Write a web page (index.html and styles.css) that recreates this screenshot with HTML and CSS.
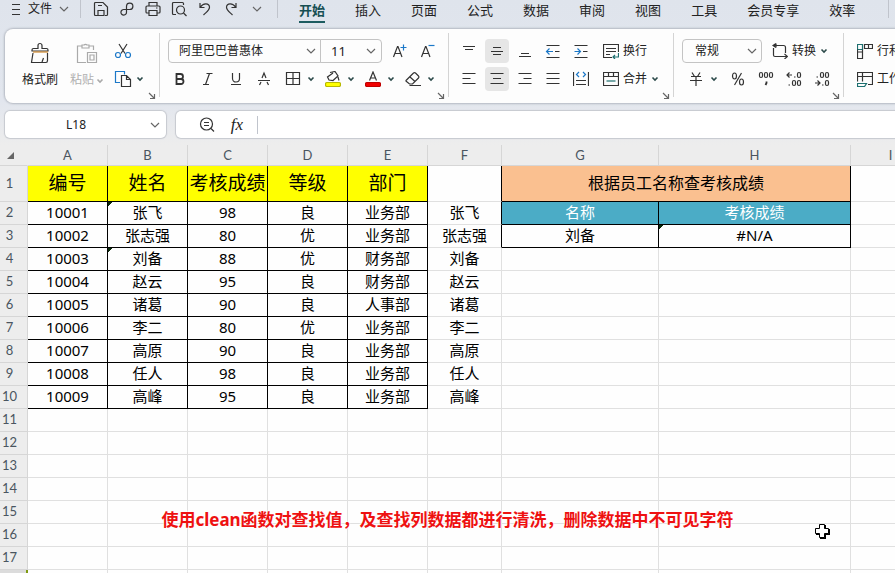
FILE: index.html
```html
<!DOCTYPE html>
<html lang="zh-CN">
<head>
<meta charset="utf-8">
<title>考核成绩</title>
<link rel="stylesheet" href="styles.css">
</head>
<body>
<svg class="defs" aria-hidden="true">
  <symbol id="chev" viewBox="0 0 10 6"><path d="M1 1l4 4 4-4"/></symbol>
  <symbol id="caret" viewBox="0 0 8 6"><path d="M1.500 1.500L4 4l2.500-2.500" stroke-width="1.600"/></symbol>
  <symbol id="launch" viewBox="0 0 8 8"><path d="M1 1l5 5M6.500 2v4.500H2"/></symbol>
</svg>

<header class="topbar">
  <button class="file"><svg class="burger" viewBox="0 0 10 14"><path d="M1 2.500h8M1 7.500h8M1 12.500h8"/></svg>文件<svg class="chev"><use href="#chev"/></svg></button>
  <span class="rule"></span>
  <div class="quick">
    <button aria-label="保存"><svg viewBox="0 0 16 16"><path d="M5 14.500H2.500a1 1 0 0 1-1-1v-11a1 1 0 0 1 1-1H10l4.500 4.500v7.500a1 1 0 0 1-1 1H12M5 14.500v-5h6v5zM5 4.500h4"/></svg></button>
    <button aria-label="输出"><svg viewBox="0 0 16 16"><path d="M9 8.500H5a2.800 2.800 0 1 0 2.500 2.500V5a3.200 3.200 0 1 1 3.200 3.500H9"/></svg></button>
    <button aria-label="打印"><svg viewBox="0 0 16 16"><path d="M4 5V1.500h8V5M4 12H2a1 1 0 0 1-1-1V6a1 1 0 0 1 1-1h12a1 1 0 0 1 1 1v5a1 1 0 0 1-1 1h-2M4 9.500h8v5H4zM11 7h1.500"/></svg></button>
    <button aria-label="打印预览"><svg viewBox="0 0 16 16"><path d="M5 13.500H2.500a1 1 0 0 1-1-1v-10a1 1 0 0 1 1-1h9a1 1 0 0 1 1 1V4"/><circle cx="9.500" cy="9" r="4"/><path d="M12.500 12l3 3"/></svg></button>
    <button aria-label="撤销"><svg viewBox="0 0 16 16"><path d="M3 2v4.500h4.500M3.500 6C6 2 12 1.500 12.500 6c.2 3-3 5-6 8"/></svg></button>
    <button aria-label="恢复"><svg viewBox="0 0 16 16"><path d="M13 2v4.500H8.500M12.500 6C10 2 4 1.500 3.500 6c-.2 3 3 5 6 8"/></svg></button>
    <button aria-label="更多"><svg class="chev"><use href="#chev"/></svg></button>
  </div>
  <span class="rule"></span>
  <nav class="tabs">
    <a class="active" href="#home">开始</a><a href="#insert">插入</a><a href="#page">页面</a><a href="#formula">公式</a><a href="#data">数据</a><a href="#review">审阅</a><a href="#view">视图</a><a href="#tools">工具</a><a href="#member">会员专享</a><a href="#speed">效率</a>
  </nav>
  <span class="rule last"></span>
</header>

<section class="ribbon">
  <div class="group clip">
    <button class="big"><svg viewBox="0 0 22 22"><path d="M3 9h16v-1a1.500 1.500 0 0 0-1.500-1.500H13V3.500a2 2 0 0 0-4 0v3H4.500A1.500 1.500 0 0 0 3 8zM4 11L2.500 20.500h14.500c1 0 1.500-1 1.500-2V11M13 20l1.500-4"/><path class="orange" d="M4 10h15"/></svg>格式刷</button>
    <button class="big off" disabled><svg viewBox="0 0 22 22"><path d="M6 4H1.500v16.500H10M13 4h4.500v4M6 6V3h2a2 2 0 0 1 3 0h2v3z"/><path d="M11.500 10.500h9v10h-9zM14 13h4v5h-4z"/></svg><span>粘贴<svg class="caret"><use href="#caret"/></svg></span></button>
    <div class="stack">
      <button aria-label="剪切"><svg class="wide" viewBox="0 0 18 16"><path d="M5 1l6 9.500M13 1L7 10.500"/><g class="blue"><circle cx="4" cy="12" r="2.500"/><circle cx="14" cy="12" r="2.500"/></g></svg></button>
      <button aria-label="复制"><svg class="wide" viewBox="0 0 18 18"><path class="blue" d="M6 12.500H1.500V1.500h9v3"/><path d="M7.500 5.500h5l4 4v7h-9zM12.500 5.500v4h4"/></svg><svg class="caret"><use href="#caret"/></svg></button>
    </div>
    <svg class="launch"><use href="#launch"/></svg>
  </div>

  <div class="group font">
    <div class="line">
      <label class="pick family"><select aria-label="字体"><option>阿里巴巴普惠体</option></select><svg class="chev"><use href="#chev"/></svg></label>
      <label class="pick size"><select aria-label="字号"><option>11</option></select><svg class="chev"><use href="#chev"/></svg></label>
      <button class="cell first" aria-label="增大字号"><svg viewBox="0 0 16 16"><path d="M1.500 14L5.500 3.500h.5L10 14M3 10.500h5.500"/><path class="blue" d="M8.500 4.500h6M11.500 1.500v6"/></svg></button>
      <button class="cell" aria-label="减小字号"><svg viewBox="0 0 16 16"><path d="M1.500 14L5.500 3.500h.5L10 14M3 10.500h5.500"/><path class="blue" d="M8.500 2.500h6"/></svg></button>
    </div>
    <div class="line">
      <button class="cell" aria-label="加粗"><svg viewBox="0 0 16 16"><path stroke-width="1.800" d="M4.500 3h4a2.500 2.500 0 0 1 0 5h-4zM4.500 8H9a2.500 2.500 0 0 1 0 5H4.500z"/></svg></button>
      <button class="cell" aria-label="斜体"><svg viewBox="0 0 16 16"><path d="M6.500 2.500h6M3 13.500h6M9.500 2.500l-4 11"/></svg></button>
      <button class="cell" aria-label="下划线"><svg viewBox="0 0 16 16"><path d="M4.500 2v5.500a3.500 3.500 0 0 0 7 0V2M3 13.500h10"/></svg></button>
      <button class="cell" aria-label="删除线"><svg viewBox="0 0 16 16"><path d="M2 9.500h12M6 7l2-5 2 5M5 11l-1.500 3M11 11l1.500 3"/></svg></button>
      <button class="combo" aria-label="边框"><svg viewBox="0 0 16 16"><path d="M1.500 1.500h13v12h-13zM8 1.500v12M1.500 7.500h13"/></svg><svg class="caret"><use href="#caret"/></svg></button>
      <button class="combo" aria-label="填充颜色"><svg viewBox="0 0 16 16"><path d="M5 1.500l5-1 3 4.500-5 4.500-4-.5-1.500-3L8 2M13 6l1 3.500"/><rect x=".5" y="11.500" width="15" height="4" rx="1.500" fill="#ffff00" stroke="#b8b800"/></svg><svg class="caret"><use href="#caret"/></svg></button>
      <button class="combo" aria-label="字体颜色"><svg viewBox="0 0 16 16"><path d="M4.500 9.500L8 1 11.500 9.500M5.500 7h5"/><rect x=".5" y="11.500" width="15" height="4" rx="1.500" fill="#f00000" stroke="#c00000"/></svg><svg class="caret"><use href="#caret"/></svg></button>
      <button class="combo" aria-label="清除"><svg viewBox="0 0 16 16"><path d="M1 9.500L8.500 2q1-.8 2 0L13.500 5q1 1 0 2L7.500 13H4.500L1.500 10.500q-.8-.6-.5-1zM5 6l5 4.500M4.500 14.500H16"/></svg><svg class="caret"><use href="#caret"/></svg></button>
    </div>
    <svg class="launch"><use href="#launch"/></svg>
  </div>

  <div class="group align">
    <div class="line">
      <button class="cell" aria-label="顶端对齐"><svg viewBox="0 0 16 16"><path d="M2 3.500h12M4 6.500h8"/></svg></button>
      <button class="cell" aria-label="垂直居中"><svg class="on" viewBox="0 0 24 24"><path d="M8 8.500h8M6 12.500h12M8 15.500h8"/></svg></button>
      <button class="cell" aria-label="底端对齐"><svg viewBox="0 0 16 16"><path d="M4 10.500h8M2 13.500h12"/></svg></button>
      <button class="cell" aria-label="减少缩进"><svg viewBox="0 0 16 16"><path d="M1.500 2.500h13M1.500 14.500h13M10 8.500h4.500"/><path class="blue" d="M8 8.500H2M4.500 5.500l-3 3 3 3"/></svg></button>
      <button class="cell" aria-label="增加缩进"><svg viewBox="0 0 16 16"><path d="M1.500 2.500h13M1.500 14.500h13M10 8.500h4.500"/><path class="blue" d="M1.500 8.500H7M4.500 5.500l3 3-3 3"/></svg></button>
      <button class="text"><svg viewBox="0 0 16 16"><path d="M9 14.500H.5v-13h15V9M3 5.500h10M3 8.500h10M3 11.500h4"/><path class="teal" d="M15.500 10v4h-5M12 12l-2 2 2 2"/></svg>换行</button>
    </div>
    <div class="line">
      <button class="cell" aria-label="左对齐"><svg viewBox="0 0 16 16"><path d="M1.500 2.500h13M1.500 7.500h8M1.500 12.500h13"/></svg></button>
      <button class="cell" aria-label="水平居中"><svg class="on" viewBox="0 0 24 24"><path d="M5.500 6.500h13M8 11.500h8M5.500 16.500h13"/></svg></button>
      <button class="cell" aria-label="右对齐"><svg viewBox="0 0 16 16"><path d="M1.500 2.500h13M6.500 7.500h8M1.500 12.500h13"/></svg></button>
      <button class="cell" aria-label="两端对齐"><svg viewBox="0 0 16 16"><path d="M1.500 2.500h13M1.500 7.500h13M1.500 12.500h13"/></svg></button>
      <button class="cell" aria-label="分散对齐"><svg viewBox="0 0 16 16"><path d="M.5 1v14M15.500 1v14M3 9.500h10M3 13.500h10"/><path class="blue" d="M6 1L3.500 3.500 6 6M10 1l2.500 2.500L10 6"/></svg></button>
      <button class="text"><svg viewBox="0 0 16 16"><path d="M.5 1.500h15v13H.5zM.5 5.500h15M5.500 1.500v4M10.500 1.500v4"/><path class="teal" d="M3.500 10h9"/></svg>合并<svg class="caret"><use href="#caret"/></svg></button>
    </div>
    <svg class="launch"><use href="#launch"/></svg>
  </div>

  <div class="group number">
    <div class="line">
      <label class="pick format"><select aria-label="数字格式"><option>常规</option></select><svg class="chev"><use href="#chev"/></svg></label>
      <button class="text"><svg viewBox="0 0 16 16"><path d="M4 .5v4M2 2.500h9.500a2 2 0 0 1 2 2V10M1.500 5v7a1.500 1.500 0 0 0 1.500 1.500h12M12.500 11l3 2.500-3 2.500M4 .5L1 2.500l3 2"/></svg>转换<svg class="caret"><use href="#caret"/></svg></button>
    </div>
    <div class="line">
      <button class="combo" aria-label="货币"><svg viewBox="0 0 16 16"><path d="M4 1.500l2.500 4M12 1.500l-2.500 4M3 5.500h10M2 9.500h12M8 5.500V15"/></svg><svg class="caret"><use href="#caret"/></svg></button>
      <button class="cell" aria-label="百分比"><svg viewBox="0 0 16 16"><path d="M11.500 2l-7 12"/><ellipse cx="4.500" cy="5" rx="2" ry="3"/><ellipse cx="11.500" cy="11" rx="2" ry="3"/></svg></button>
      <button class="cell" aria-label="千位分隔"><svg viewBox="0 0 16 16"><rect x="1.500" y="1.500" width="3" height="5" rx="1.500"/><rect x="6.500" y="1.500" width="3" height="5" rx="1.500"/><rect x="11.500" y="1.500" width="3" height="5" rx="1.500"/><path stroke-width="1.800" d="M8.500 10.500v1.500L7.500 14"/></svg></button>
      <button class="cell" aria-label="增加小数位"><svg viewBox="0 0 16 16"><path d="M1 4h5M3.500 1.500L1 4l2.500 2.500M8 6h1.500M2.500 14H4"/><rect x="11.500" y="1.500" width="3" height="5" rx="1.500"/><rect x="6.500" y="9.500" width="3" height="5" rx="1.500"/><rect x="11.500" y="9.500" width="3" height="5" rx="1.500"/></svg></button>
      <button class="cell" aria-label="减少小数位"><svg viewBox="0 0 16 16"><path d="M1 12h5M3.500 9.500L6 12l-2.500 2.500M8 14h1.500M2.500 6H4"/><rect x="6.500" y="1.500" width="3" height="5" rx="1.500"/><rect x="11.500" y="1.500" width="3" height="5" rx="1.500"/><rect x="11.500" y="9.500" width="3" height="5" rx="1.500"/></svg></button>
    </div>
    <svg class="launch"><use href="#launch"/></svg>
  </div>

  <div class="group cells">
    <div class="line"><button class="text"><svg viewBox="0 0 16 16"><path class="teal" d="M.5 1.500h5v5h-5z"/><path d="M.5 9v6.500h5V9zM.5 6.500V9M5.500 6.500V9M7.500 1.500h8v4h-8zM11.500 1.500v4"/></svg>行和列</button></div>
    <div class="line"><button class="text"><svg viewBox="0 0 16 16"><path d="M.5 10.500v-9h15v12H11M.5 5.500h15M5.500 1.500v9"/><path class="teal" d="M.5 12.500h9l-2 3h-7z"/></svg>工作表</button></div>
  </div>
</section>

<section class="formula">
  <div class="namebox"><input aria-label="名称框" value="L18"><svg class="chev"><use href="#chev"/></svg></div>
  <div class="entry">
    <svg class="icon" viewBox="0 0 16 16"><circle cx="7.500" cy="7" r="6"/><path d="M12 11.500l3 3M5 5.500h5M5 8.500h5"/></svg>
    <button class="fx" aria-label="插入函数"><i>fx</i></button>
    <span class="rule"></span>
    <input aria-label="编辑栏">
  </div>
</section>

<main class="sheet">
<table>
<colgroup><col class="c-row"><col class="c-a"><col class="c-a"><col class="c-a"><col class="c-a"><col class="c-a"><col class="c-f"><col class="c-g"><col class="c-h"><col class="c-a"></colgroup>
<thead><tr><th class="corner"><svg viewBox="0 0 7 7"><path d="M7 0v7H0z"/></svg></th><th>A</th><th>B</th><th>C</th><th>D</th><th>E</th><th>F</th><th>G</th><th>H</th><th>I</th></tr></thead>
<tbody>
<tr class="head"><th>1</th><td class="b y">编号</td><td class="b y">姓名</td><td class="b y">考核成绩</td><td class="b y">等级</td><td class="b y">部门</td><td class="edge"></td><td class="b title" colspan="2">根据员工名称查考核成绩</td><td></td></tr>
<tr><th>2</th><td class="b">10001</td><td class="b flag">张飞</td><td class="b">98</td><td class="b">良</td><td class="b">业务部</td><td class="edge">张飞</td><td class="b teal-bg">名称</td><td class="b teal-bg">考核成绩</td><td></td></tr>
<tr><th>3</th><td class="b">10002</td><td class="b">张志强</td><td class="b">80</td><td class="b">优</td><td class="b">业务部</td><td class="edge">张志强</td><td class="b">刘备</td><td class="b flag">#N/A</td><td></td></tr>
<tr><th>4</th><td class="b">10003</td><td class="b flag">刘备</td><td class="b">88</td><td class="b">优</td><td class="b">财务部</td><td>刘备</td><td></td><td></td><td></td></tr>
<tr><th>5</th><td class="b">10004</td><td class="b">赵云</td><td class="b">95</td><td class="b">良</td><td class="b">财务部</td><td>赵云</td><td></td><td></td><td></td></tr>
<tr><th>6</th><td class="b">10005</td><td class="b">诸葛</td><td class="b">90</td><td class="b">良</td><td class="b">人事部</td><td>诸葛</td><td></td><td></td><td></td></tr>
<tr><th>7</th><td class="b">10006</td><td class="b">李二</td><td class="b">80</td><td class="b">优</td><td class="b">业务部</td><td>李二</td><td></td><td></td><td></td></tr>
<tr><th>8</th><td class="b">10007</td><td class="b">高原</td><td class="b">90</td><td class="b">良</td><td class="b">业务部</td><td>高原</td><td></td><td></td><td></td></tr>
<tr><th>9</th><td class="b">10008</td><td class="b">任人</td><td class="b">98</td><td class="b">良</td><td class="b">业务部</td><td>任人</td><td></td><td></td><td></td></tr>
<tr><th>10</th><td class="b">10009</td><td class="b">高峰</td><td class="b">95</td><td class="b">良</td><td class="b">业务部</td><td>高峰</td><td></td><td></td><td></td></tr>
<tr><th>11</th><td></td><td></td><td></td><td></td><td></td><td></td><td></td><td></td><td></td></tr>
<tr><th>12</th><td></td><td></td><td></td><td></td><td></td><td></td><td></td><td></td><td></td></tr>
<tr><th>13</th><td></td><td></td><td></td><td></td><td></td><td></td><td></td><td></td><td></td></tr>
<tr><th>14</th><td></td><td></td><td></td><td></td><td></td><td></td><td></td><td></td><td></td></tr>
<tr><th>15</th><td></td><td></td><td></td><td></td><td></td><td></td><td></td><td></td><td></td></tr>
<tr><th>16</th><td></td><td></td><td></td><td></td><td></td><td></td><td></td><td></td><td></td></tr>
<tr><th>17</th><td></td><td></td><td></td><td></td><td></td><td></td><td></td><td></td><td></td></tr>
<tr class="current"><th></th><td></td><td></td><td></td><td></td><td></td><td></td><td></td><td></td><td></td></tr>
</tbody>
</table>
<p class="caption">使用clean函数对查找值，及查找列数据都进行清洗，删除数据中不可见字符</p>
<svg class="cursor" viewBox="0 0 16 16" aria-hidden="true"><path class="shade" d="M6 2h6v4h4v6h-4v4H6v-4H2V6h4z"/><path class="cross" d="M5.500 1.500h5v4h4v5h-4v4h-5v-4h-4v-5h4z"/></svg>
</main>
</body>
</html>
```
FILE: styles.css
```css
* { box-sizing: border-box; }

body {
  margin: 0;
  height: 100vh;
  display: flex;
  flex-direction: column;
  overflow: hidden;
  background: linear-gradient(#dfe4ec 0, #e2e6ee 100px, #ededed 145px);
  color: #222;
  font: 12px/20px "Noto Sans", "Noto Sans CJK SC", sans-serif;
}

.defs { position: absolute; width: 0; height: 0; }

svg {
  flex: none;
  width: 16px;
  height: 16px;
  fill: none;
  stroke: #333;
  stroke-width: 1.2;
}

svg.chev { width: 10px; height: 6px; stroke: #666; }
svg.caret { width: 8px; height: 6px; stroke: #2c4a4a; }
.blue { stroke: #1c78c8; }
.teal { stroke: #1d7070; }
.orange { stroke: #d08a30; }

button, input, select {
  margin: 0;
  padding: 0;
  border: 0;
  background: none;
  color: inherit;
  font: inherit;
}

button {
  display: flex;
  align-items: center;
  justify-content: center;
  white-space: nowrap;
}

.rule { flex: none; width: 1px; height: 18px; background: #c0c4cc; }

/* Menu bar */
.topbar {
  flex: none;
  display: flex;
  height: 29px;
}

.file { height: 18px; padding: 0 11px; gap: 7px; }
.burger { width: 10px; height: 14px; }
.quick { display: flex; flex: none; padding: 0 7px; }
.quick button { width: 26px; height: 18px; }
.tabs { display: flex; flex: none; padding-left: 6px; }
.tabs a {
  height: 23px;
  margin: 0 15px;
  color: #222;
  font-size: 13px;
  text-decoration: none;
  white-space: nowrap;
}
.tabs .active {
  border-bottom: 2px solid #1d5c60;
  color: #174f53;
  font-weight: 700;
}
.last { margin-left: 18px; }

/* Ribbon */
.ribbon {
  flex: none;
  display: flex;
  margin-left: 5px;
  padding: 4px 0 6px;
  border-radius: 8px 0 0 8px;
  background: #fdfdfd;
  box-shadow: 0 0 2px 1px #b4b9c2;
}

.group {
  position: relative;
  flex: none;
  padding: 4px 8px;
  border-right: 1px solid #d4d4d4;
}
.group.clip { display: flex; width: 155px; }
.font { width: 289px; }
.align { width: 225px; }
.number { width: 170px; }
.cells { width: 120px; border: 0; }
.group .launch { position: absolute; right: 3px; bottom: -3px; width: 8px; height: 8px; stroke: #666; }

.line { display: flex; align-items: center; height: 28px; }

.big { flex-direction: column; width: 48px; padding-top: 2px; gap: 6px; }
.clip .big { margin-left: 3px; }
.clip .off { margin-left: -1px; color: #b0b0b0; }
.big svg { width: 22px; height: 22px; }
.big svg.caret { margin-left: 2px; width: 8px; height: 6px; vertical-align: middle; }
.off svg, .off svg.caret { stroke: #aaa; }
.stack button { width: 36px; height: 28px; gap: 4px; justify-content: flex-start; }
.stack { margin-left: 3px; }
.wide { width: 18px; height: 18px; }

.pick {
  display: flex;
  flex: none;
  align-items: center;
  height: 24px;
  border: 1px solid #c4c4c4;
  border-radius: 4px;
}
.pick select { flex: 1; min-width: 0; height: 22px; padding-left: 10px; appearance: none; }
.pick .chev { margin: 0 4px; }
.family { width: 153px; border-radius: 4px 0 0 4px; }
.size { width: 62px; margin-left: -1px; border-radius: 0 4px 4px 0; }
.size .chev { margin-right: 5px; }
.size select { font-size: 13px; }
.format { width: 80px; margin-right: 10px; }
.format select { padding-left: 12px; }

.cell { flex: none; width: 28px; height: 28px; }
.font .first { margin-left: 4px; }
.combo { flex: none; width: 40px; height: 28px; gap: 6px; }
.font .combo { padding-left: 4px; }
.number .combo { width: 42px; }
.font .line + .line { margin-left: -2px; }
.align .line { margin-left: -2px; }
.on { width: 24px; height: 24px; border-radius: 4px; background: #e6e6e6; }
.text { gap: 4px; }
.align .text { margin-left: 8px; }
.cells .line { padding-left: 5px; }

/* Formula bar */
.formula { flex: none; display: flex; gap: 10px; margin: 8px 0 7px 5px; }
.namebox, .entry {
  display: flex;
  align-items: center;
  height: 27px;
  background: #fff;
  border-radius: 5px;
  box-shadow: 0 0 1px 1px #c6c9cf;
}
.namebox { width: 161px; padding-right: 6px; }
.namebox input { flex: 1; min-width: 0; padding-right: 3px; text-align: center; }
.entry { flex: 1; padding-left: 23px; border-radius: 5px 0 0 5px; }
.entry input { flex: 1; min-width: 0; }
.fx { width: 30px; margin: 0 5px 0 7px; font: 17px/24px "Liberation Serif", serif; }

/* Worksheet */
.sheet { position: relative; flex: 1; min-height: 0; overflow: hidden; background: #fefefe; }
table { width: 931px; table-layout: fixed; border-collapse: separate; border-spacing: 0; }
.c-row { width: 28px; }
.c-a { width: 80px; }
.c-f { width: 74px; }
.c-g { width: 157px; }
.c-h { width: 192px; }

th, td {
  height: 23px;
  padding: 0 0 2px;
  border: solid #e0e0e0;
  border-width: 0 1px 1px 0;
  line-height: 20px;
  text-align: center;
  white-space: nowrap;
}
th {
  background: #ededed;
  border-color: #d6d6d6;
  color: #4a5560;
  font-family: Lato, sans-serif;
  font-size: 13px;
  font-weight: 400;
}
thead th { height: 21px; padding: 0; }
tbody th { padding-right: 8px; }
.corner { border-right-color: #ededed; }
.corner svg { display: block; width: 7px; height: 7px; margin-left: 7px; fill: #666; stroke: none; }
td { color: #000; font-size: 15px; }
.head td { height: 36px; font-size: 19px; line-height: 24px; }
.head .title { background: #fac090; font-size: 16px; }
.y { background: #ffff00; }
.b { border-color: #000; }
.edge { border-right-color: #000; }
.teal-bg { background: #4bacc6; color: #fff; }
.flag { background: linear-gradient(135deg, #0a280a 50%, transparent 50%) 0 0 / 5px 5px no-repeat; }
.current th { background: #dcdcdc; border-right: 2px solid #7f9a10; }

.caption {
  position: absolute;
  top: 363px;
  left: 0;
  right: 0;
  margin: 0;
  color: #ee1111;
  font-size: 17px;
  font-weight: 700;
  line-height: 24px;
  text-align: center;
  white-space: nowrap;
  text-shadow: 0 0 2px #fff, 0 0 2px #fff;
}
.cursor { position: absolute; top: 378px; left: 814px; }
.cursor .shade { fill: #000; stroke: none; }
.cursor .cross { fill: #fff; stroke: #000; stroke-width: 1; }
```
